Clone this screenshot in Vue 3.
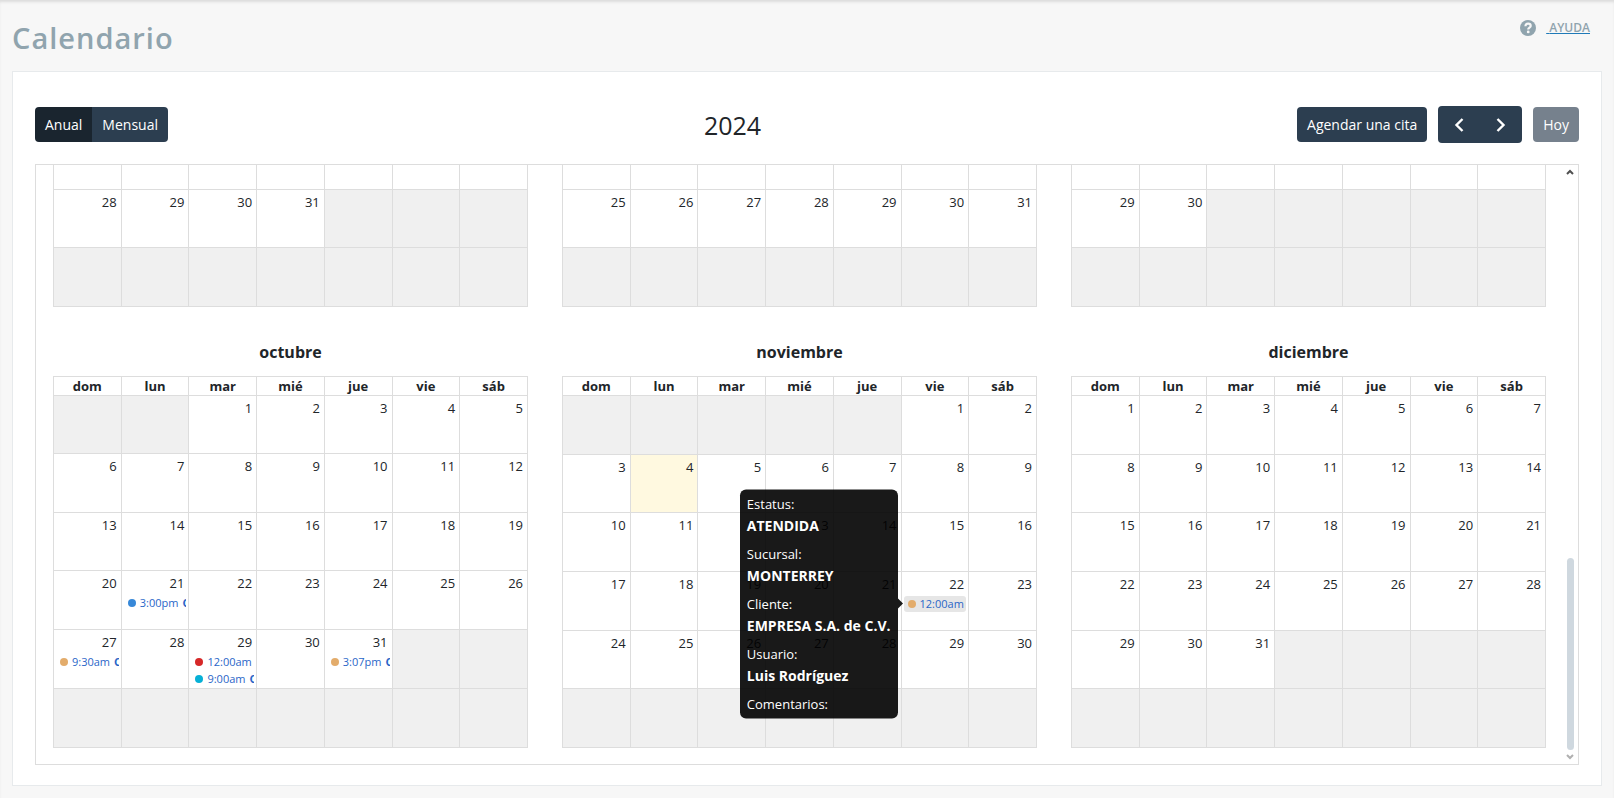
<script setup>
import { ref, computed, onMounted, onBeforeUnmount } from 'vue'

const year = 2024
const today = '11-4'
const blockHeight = 441
const monthNames = ['enero', 'febrero', 'marzo', 'abril', 'mayo', 'junio', 'julio', 'agosto', 'septiembre', 'octubre', 'noviembre', 'diciembre']
const dayNames = ['dom', 'lun', 'mar', 'mié', 'jue', 'vie', 'sáb']

const events = {
  '10-21': [{ time: '3:00pm', title: 'C', tone: 'blue' }],
  '10-27': [{ time: '9:30am', title: 'C', tone: 'sand' }],
  '10-29': [
    { time: '12:00am', title: '', tone: 'red' },
    { time: '9:00am', title: 'C', tone: 'cyan' }
  ],
  '10-31': [{ time: '3:07pm', title: 'C', tone: 'sand' }],
  '11-22': [
    {
      time: '12:00am',
      title: '',
      tone: 'sand',
      details: [
        ['Estatus:', 'ATENDIDA'],
        ['Sucursal:', 'MONTERREY'],
        ['Cliente:', 'EMPRESA S.A. de C.V.'],
        ['Usuario:', 'Luis Rodríguez'],
        ['Comentarios:', '']
      ]
    }
  ]
}

const months = monthNames.map((name, m) => {
  const first = new Date(year, m, 1).getDay()
  const count = new Date(year, m + 1, 0).getDate()
  const weeks = Array.from({ length: 6 }, (_, w) =>
    Array.from({ length: 7 }, (_, d) => {
      const n = w * 7 + d - first + 1
      if (n < 1 || n > count) return { day: null, events: [] }
      const key = `${m + 1}-${n}`
      return { day: n, today: key === today, events: events[key] || [] }
    })
  )
  return { name, weeks, row: Math.floor(m / 3) }
})

const view = ref('anual')
const scroller = ref(null)
const metrics = ref({ top: 0, view: 1, full: 1 })

function measure() {
  const el = scroller.value
  metrics.value = { top: el.scrollTop, view: el.clientHeight, full: el.scrollHeight }
}
function step(dir) {
  scroller.value.scrollTop += dir * 60
}
// Only the rows of months that meet the scrolled area are rendered.
function inView(row) {
  const { top, view: height } = metrics.value
  return (row + 1) * blockHeight > top && row * blockHeight < top + height
}
const thumbStyle = computed(() => ({
  top: `${(metrics.value.top / metrics.value.full) * 100}%`,
  height: `${(metrics.value.view / metrics.value.full) * 100}%`
}))

onMounted(() => {
  scroller.value.scrollTop = scroller.value.scrollHeight
  measure()
  window.addEventListener('resize', measure)
})
onBeforeUnmount(() => window.removeEventListener('resize', measure))
</script>

<template>
  <main class="page">
    <header class="page-head">
      <h1>Calendario</h1>
      <div class="help">
        <svg class="help-icon" viewBox="0 0 16 16" aria-hidden="true">
          <circle cx="8" cy="8" r="8" fill="#90a4ae" />
          <path d="M5.400 6.200C5.500 4.500 6.600 3.700 8.100 3.700C9.700 3.700 10.700 4.600 10.700 5.900C10.700 7.600 8.200 7.500 8.200 9.400" fill="none" stroke="#f7f7f7" stroke-width="2.200" />
          <circle cx="8.200" cy="11.900" r="1.400" fill="#f7f7f7" />
        </svg>
        <a href="#ayuda">&nbsp;<span>AYUDA</span></a>
      </div>
    </header>

    <section class="card">
      <div class="toolbar">
        <div class="group">
          <button class="btn" :class="{ active: view === 'anual' }" type="button" @click="view = 'anual'">Anual</button>
          <button class="btn" :class="{ active: view === 'mensual' }" type="button" @click="view = 'mensual'">Mensual</button>
        </div>
        <h2>{{ year }}</h2>
        <div class="actions">
          <button class="btn" type="button">Agendar una cita</button>
          <div class="group">
            <button class="btn nav" type="button" aria-label="Anterior">
              <svg viewBox="0 0 10 14" aria-hidden="true"><path d="M8.500 1L2.500 7L8.500 13" /></svg>
            </button>
            <button class="btn nav" type="button" aria-label="Siguiente">
              <svg viewBox="0 0 10 14" aria-hidden="true"><path d="M1.500 1L7.500 7L1.500 13" /></svg>
            </button>
          </div>
          <button class="btn" type="button" disabled>Hoy</button>
        </div>
      </div>

      <div class="frame">
        <div ref="scroller" class="months" @scroll="measure">
          <section v-for="month in months" :key="month.name" class="month">
            <template v-if="inView(month.row)">
              <h3>{{ month.name }}</h3>
              <table>
                <thead>
                  <tr>
                    <th v-for="d in dayNames" :key="d" scope="col">{{ d }}</th>
                  </tr>
                </thead>
                <tbody>
                  <tr v-for="(week, w) in month.weeks" :key="w">
                    <td v-for="(cell, d) in week" :key="d" :class="{ off: !cell.day, today: cell.today }">
                      <div v-if="cell.day" class="day">{{ cell.day }}</div>
                      <a v-for="ev in cell.events" :key="ev.time" href="#cita" class="event" :class="{ open: ev.details }">
                        <span class="event-line">
                          <span class="dot" :class="ev.tone"></span>
                          <span>{{ ev.time }}</span>
                          <b v-if="ev.title">{{ ev.title }}</b>
                        </span>
                        <span v-if="ev.details" class="tip" role="tooltip">
                          <span v-for="[label, value] in ev.details" :key="label" class="tip-item">
                            <span>{{ label }}</span>
                            <strong v-if="value">{{ value }}</strong>
                          </span>
                        </span>
                      </a>
                    </td>
                  </tr>
                </tbody>
              </table>
            </template>
          </section>
        </div>
        <div class="bar">
          <button type="button" aria-label="Subir" @click="step(-1)">
            <svg viewBox="0 0 8 6" aria-hidden="true"><path d="M1 5L4 2L7 5" stroke="#505050" /></svg>
          </button>
          <div class="track"><div class="thumb" :style="thumbStyle"></div></div>
          <button type="button" aria-label="Bajar" @click="step(1)">
            <svg viewBox="0 0 8 6" aria-hidden="true"><path d="M1 1L4 4L7 1" stroke="#b0b0b0" /></svg>
          </button>
        </div>
      </div>
    </section>
  </main>
</template>

<style>
body {
  margin: 0;
  background: #f7f7f7;
}
</style>

<style scoped>
* {
  box-sizing: border-box;
}
.page {
  display: flex;
  flex-direction: column;
  height: 100vh;
  min-height: 480px;
  padding: 0 12px 12px;
  background: #f7f7f7;
  box-shadow: inset 0 3px 3px -1px #dcdcdc;
  font-family: "Open Sans", "Noto Sans", sans-serif;
  font-size: 13px;
  color: #212529;
}
.page-head {
  display: flex;
  justify-content: space-between;
  align-items: flex-start;
  height: 71px;
  padding: 17px 12px 0 0;
}
h1 {
  margin: 0;
  font-size: 29px;
  line-height: 42px;
  font-weight: 600;
  letter-spacing: 1px;
  color: #90a4ae;
}
.help {
  display: flex;
  align-items: center;
  gap: 10px;
  height: 21px;
}
.help-icon {
  width: 16px;
  height: 16px;
}
.help a {
  font-size: 12px;
  font-weight: 600;
  line-height: 22px;
  color: #1f7ab8;
  text-decoration: underline;
}
.help a span {
  color: #90a4ae;
}
.card {
  flex: 1;
  min-height: 0;
  display: flex;
  flex-direction: column;
  gap: 21px;
  padding: 34px 22px 20px;
  border: 1px solid #e7eaec;
  background: #fff;
}
.toolbar {
  display: flex;
  justify-content: space-between;
  align-items: center;
}
h2 {
  margin: 0;
  font-size: 25px;
  line-height: 36px;
  font-weight: 500;
}
.actions {
  display: flex;
  align-items: center;
  gap: 11px;
}
.group {
  display: flex;
}
.btn {
  height: 35px;
  padding: 0 10px;
  border: 0;
  border-radius: 4px;
  background: #2c3e50;
  color: #fff;
  font: inherit;
  font-size: 14px;
}
.btn.active {
  background: #1a252f;
}
.btn:disabled {
  background: #76818d;
}
.group .btn:first-child {
  border-radius: 4px 0 0 4px;
}
.group .btn:last-child {
  border-radius: 0 4px 4px 0;
}
.btn.nav {
  display: flex;
  align-items: center;
  justify-content: center;
  width: 42px;
  height: 37px;
}
.nav svg {
  width: 10px;
  height: 14px;
  fill: none;
  stroke: #fff;
  stroke-width: 2.400;
}
.frame {
  flex: 1;
  min-height: 0;
  display: flex;
  border: 1px solid #ddd;
}
.months {
  flex: 1;
  min-width: 0;
  display: grid;
  grid-template-columns: repeat(3, minmax(0, 1fr));
  column-gap: 34px;
  padding: 0 16px 16px 17px;
  overflow-y: auto;
  scrollbar-width: none;
}
.month {
  height: 441px;
}
h3 {
  margin: 0;
  padding: 33px 0 12px;
  font-size: 16px;
  line-height: 24px;
  font-weight: 700;
  text-align: center;
}
table {
  width: 100%;
  height: 372px;
  table-layout: fixed;
  border-collapse: collapse;
}
th,
td {
  padding: 0;
  border: 1px solid #ddd;
}
th {
  height: 19px;
  padding-top: 1px;
  line-height: 17px;
  font-weight: 700;
}
td {
  height: 58px;
  vertical-align: top;
}
td.off {
  background: #f0f0f0;
}
td.today {
  background: #fff9e0;
}
.day {
  padding-right: 4px;
  line-height: 24px;
  text-align: right;
}
.event {
  display: block;
  position: relative;
  margin: 0 2px 1px;
  border-radius: 3px;
  font-size: 11px;
  line-height: 16px;
  color: #2a66c8;
  text-decoration: none;
}
.event.open {
  z-index: 2;
  background: #e6e6e6;
}
.event-line {
  display: flex;
  align-items: center;
  gap: 4px;
  padding-left: 4px;
  overflow: hidden;
  white-space: nowrap;
}
.dot {
  flex: none;
  width: 8px;
  height: 8px;
  border-radius: 50%;
}
.blue {
  background: #3788d8;
}
.sand {
  background: #e3ac6b;
}
.red {
  background: #d62828;
}
.cyan {
  background: #06b0d6;
}
.tip {
  position: absolute;
  top: 50%;
  right: 100%;
  transform: translateY(-50%);
  margin-right: 6px;
  padding: 4px 7px 0;
  border-radius: 6px;
  background: rgba(0, 0, 0, 0.9);
  color: #fff;
  font-size: 13px;
  line-height: 21px;
  white-space: nowrap;
}
.tip strong {
  font-size: 14px;
}
.tip::after {
  content: "";
  position: absolute;
  top: 50%;
  left: 100%;
  margin-top: -5px;
  border: 5px solid transparent;
  border-left-color: #191919;
  border-right-width: 0;
}
.tip-item {
  display: block;
  margin-bottom: 8px;
}
.tip-item:last-child {
  margin-bottom: 4px;
}
.tip-item span,
.tip-item strong {
  display: block;
}
.bar {
  display: flex;
  flex-direction: column;
  width: 16px;
}
.bar button {
  display: flex;
  align-items: center;
  justify-content: center;
  height: 14px;
  padding: 0;
  border: 0;
  background: none;
}
.bar svg {
  width: 8px;
  height: 6px;
  fill: none;
  stroke-width: 2;
}
.track {
  flex: 1;
  position: relative;
}
.thumb {
  position: absolute;
  left: 5px;
  width: 7px;
  border-radius: 4px;
  background: #cfd8df;
}
</style>
